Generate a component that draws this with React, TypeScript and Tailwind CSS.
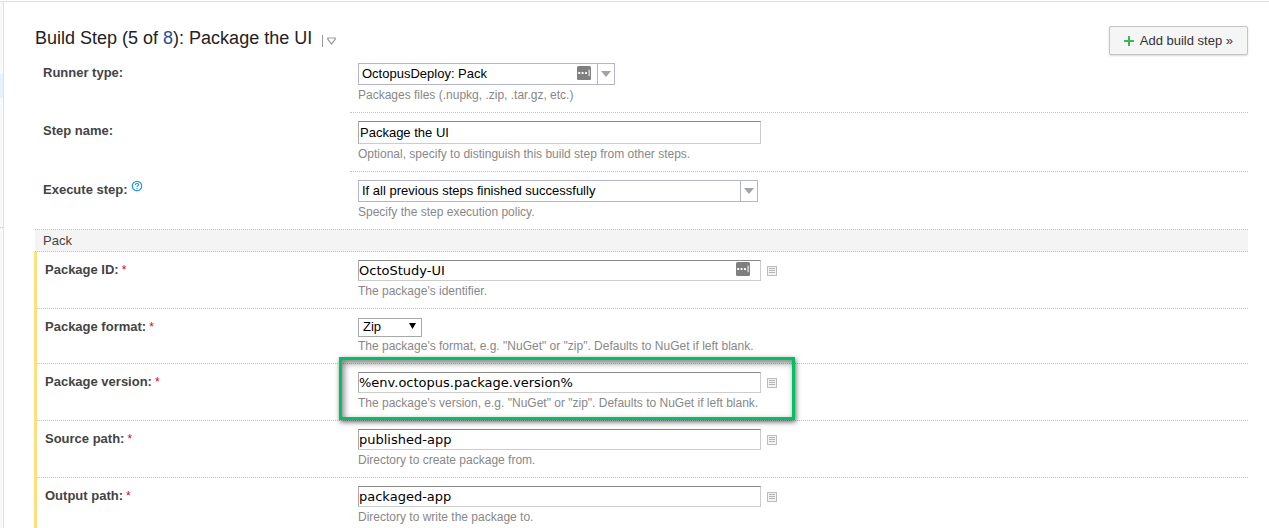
import type { ReactNode } from "react";

type RowProps = {
  id: string;
  label: string;
  hint: string;
  required?: boolean;
  help?: boolean;
  last?: boolean;
  highlighted?: boolean;
  children: ReactNode;
};

const textInput =
  "max-w-full border border-[#ccc] border-t-[#888] border-l-[#aaa] bg-white text-[13px] text-black outline-none";

function HelpIcon() {
  return (
    <svg width="12" height="12" viewBox="0 0 12 12" fill="none" aria-hidden="true">
      <circle cx="6" cy="6" r="4.7" stroke="#1a97f5" strokeWidth="1.2" />
      <path d="M4.4 4.9C4.4 3 7.6 3 7.6 4.8C7.6 5.9 6 5.8 6 7" stroke="#1a97f5" strokeWidth="1.1" />
      <path d="M6 7.8V9" stroke="#1a97f5" strokeWidth="1.1" />
    </svg>
  );
}

function PasswordIcon() {
  return (
    <svg width="14" height="14" viewBox="0 0 14 14" aria-hidden="true">
      <rect width="14" height="14" rx="1.5" fill="#7f7f7f" />
      <g fill="#fff">
        <rect x="1.2" y="6" width="2" height="2" rx="0.6" />
        <rect x="4.6" y="6" width="2" height="2" rx="0.6" />
        <rect x="8" y="6" width="2" height="2" rx="0.6" />
        <rect x="11.6" y="3.6" width="1" height="6.6" />
      </g>
    </svg>
  );
}

function ListIcon() {
  return (
    <svg width="10" height="10" viewBox="0 0 10 10" aria-hidden="true">
      <rect x="0.5" y="0.5" width="9" height="9" fill="#f3f3f3" stroke="#bdbdbd" />
      <path d="M2 2.5H8M2 4.5H8M2 6.5H8" stroke="#adadad" strokeWidth="0.9" />
    </svg>
  );
}

function Row({ id, label, hint, required, help, last, highlighted, children }: RowProps) {
  const grouped = Boolean(required);
  const line = last ? "" : "border-b border-dotted border-[#c4c4c4]";
  return (
    <div className={`flex ${grouped ? line : ""}`}>
      <div className={`flex shrink-0 items-start pt-2 pl-2 ${grouped ? "w-[313px]" : "w-[315px]"}`}>
        <label htmlFor={id} className="text-[13px] leading-5 font-bold text-[#444]">
          {label}
        </label>
        {required && <span className="ml-[3px] text-[12px] leading-5 text-[#e00020]">*</span>}
        {help && (
          <button type="button" aria-label="Help" className="ml-[3px]">
            <HelpIcon />
          </button>
        )}
      </div>
      <div className={`relative min-w-0 flex-1 pt-2 pb-[9px] pl-2 ${grouped ? "" : line}`}>
        {children}
        <p className="mt-0.5 text-xs leading-4 text-[#888]">{hint}</p>
        {highlighted && (
          <div className="pointer-events-none absolute -top-[7px] bottom-0 -left-[11px] w-[456px] border-3 border-[#00c063] shadow-[1px_2px_5px_rgba(0,0,0,0.6),inset_2px_3px_6px_rgba(0,0,0,0.5)]" />
        )}
      </div>
    </div>
  );
}

function Combo({ id, value, width, icon }: { id: string; value: string; width: string; icon?: boolean }) {
  return (
    <div className={`relative h-[22px] max-w-full ${width}`}>
      <select
        id={id}
        className="h-full w-full appearance-none border border-[#b4b4cc] bg-white pl-[3px] text-[13px] text-black outline-none"
      >
        <option>{value}</option>
      </select>
      {icon && (
        <span className="absolute top-[3px] right-6">
          <PasswordIcon />
        </span>
      )}
      <span className="pointer-events-none absolute inset-y-0 right-0 flex w-[18px] items-center border-l border-[#b4b4cc] pl-[3px]">
        <svg width="10" height="6" viewBox="0 0 10 6" aria-hidden="true">
          <path d="M0 0H10L5 6Z" fill="#a3a3a3" />
        </svg>
      </span>
    </div>
  );
}

function ParamField({ id, value, icon }: { id: string; value: string; icon?: boolean }) {
  return (
    <div className="flex items-center gap-1.5">
      <div className="relative flex w-[403px] max-w-full">
        <input
          id={id}
          defaultValue={value}
          className={`${textInput} h-[21px] w-full font-['DejaVu_Sans',sans-serif]`}
        />
        {icon && (
          <span className="absolute top-0.5 right-[11px]">
            <PasswordIcon />
          </span>
        )}
      </div>
      <button type="button" aria-label="Insert parameter">
        <ListIcon />
      </button>
    </div>
  );
}

export default function App() {
  return (
    <div className="flex h-screen flex-col overflow-hidden bg-white pt-px font-['Liberation_Sans',Arial,sans-serif] text-[13px] text-[#333]">
      <div className="flex flex-1 border-t border-[#dfe1e5]">
        <aside className="flex w-1 shrink-0 flex-col border-r border-[#dfe1e5] bg-[#f7f9fa]">
          <div className="mt-18 h-6 bg-[#e6f2fe]" />
          <div className="mt-[129px] border-t border-dotted border-[#ccc]" />
        </aside>
        <main className="min-w-0 flex-1 pr-[21px] pl-[31px]">
          <header className="flex h-[53px] justify-between pt-6">
            <h1 className="flex h-6 items-center text-[18px] text-[#222]">
              <span>
                Build Step (5 of{" "}
                <a href="#steps" className="text-[#1a4f9c]">
                  8
                </a>
                ): Package the UI
              </span>
              <button type="button" aria-label="Step actions" className="mt-1.5 ml-2.5 flex items-center gap-1">
                <span className="h-3 w-px bg-[#999]" />
                <svg width="9" height="8" viewBox="0 0 9 8" aria-hidden="true">
                  <path d="M0.8 1H8.2V2.2L4.5 7L0.8 2.2Z" fill="none" stroke="#999" strokeWidth="1.2" />
                </svg>
              </button>
            </h1>
            <button
              type="button"
              className="flex h-[29px] items-center gap-1.5 rounded-xs border border-[#c4c4c4] bg-[#f5f5f5] px-3.5 text-[13px] text-[#333] shadow-[0_1px_2px_rgba(0,0,0,0.15)]"
            >
              <svg width="10" height="10" viewBox="0 0 10 10" aria-hidden="true">
                <path d="M5 0V10M0 5H10" stroke="#3cb55e" strokeWidth="2" />
              </svg>
              Add build step »
            </button>
          </header>

          <form>
            <Row id="runner" label="Runner type:" hint="Packages files (.nupkg, .zip, .tar.gz, etc.)">
              <Combo id="runner" value="OctopusDeploy: Pack" width="w-[257px]" icon />
            </Row>
            <Row id="name" label="Step name:" hint="Optional, specify to distinguish this build step from other steps.">
              <input
                id="name"
                defaultValue="Package the UI"
                className={`${textInput} block h-[23px] w-[403px] pl-px`}
              />
            </Row>
            <Row id="execute" label="Execute step:" help last hint="Specify the step execution policy.">
              <Combo id="execute" value="If all previous steps finished successfully" width="w-[400px]" />
            </Row>

            <h2 className="h-[23px] border-y border-dotted border-[#c4c4c4] bg-[#f4f4f4] pl-2 text-[13px] leading-[21px] text-[#444]">
              Pack
            </h2>

            <div className="-ml-px border-l-3 border-[#ffdf80]">
              <Row id="package-id" label="Package ID:" required hint="The package's identifier.">
                <ParamField id="package-id" value="OctoStudy-UI" icon />
              </Row>
              <Row
                id="format"
                label="Package format:"
                required
                hint={'The package\'s format, e.g. "NuGet" or "zip". Defaults to NuGet if left blank.'}
              >
                <div className="relative h-[19px] w-16">
                  <select
                    id="format"
                    className="h-full w-full appearance-none border border-[#a9a9a9] bg-white pl-1 text-[13px] leading-4 text-black outline-none"
                  >
                    <option>Zip</option>
                    <option>NuGet</option>
                  </select>
                  <svg
                    className="pointer-events-none absolute top-1.5 right-1.5"
                    width="7"
                    height="6"
                    viewBox="0 0 7 6"
                    aria-hidden="true"
                  >
                    <path d="M0 0H7L3.5 6Z" fill="#000" />
                  </svg>
                </div>
              </Row>
              <Row
                id="version"
                label="Package version:"
                required
                highlighted
                hint={'The package\'s version, e.g. "NuGet" or "zip". Defaults to NuGet if left blank.'}
              >
                <ParamField id="version" value="%env.octopus.package.version%" />
              </Row>
              <Row id="source" label="Source path:" required hint="Directory to create package from.">
                <ParamField id="source" value="published-app" />
              </Row>
              <Row id="output" label="Output path:" required last hint="Directory to write the package to.">
                <ParamField id="output" value="packaged-app" />
              </Row>
            </div>
          </form>
        </main>
      </div>
    </div>
  );
}
